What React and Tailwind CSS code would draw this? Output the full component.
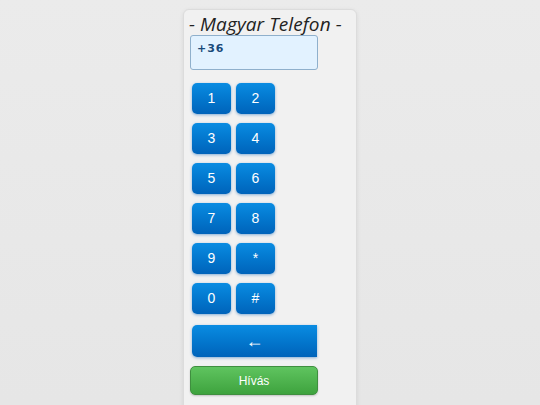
import { useState } from "react";

const keys = ["1", "2", "3", "4", "5", "6", "7", "8", "9", "*", "0", "#"];

export default function App() {
  const [number, setNumber] = useState("+36");

  const btn =
    "h-[31px] rounded-[5px] bg-gradient-to-b from-[#0a8ce2] to-[#0063ba] text-white text-[14px] shadow-[0_1px_3px_rgba(0,90,180,0.45)] flex items-center justify-center";

  return (
    <div
      className="min-h-[405px] h-[405px] overflow-hidden bg-gradient-to-b from-[#ebebeb] to-[#e6e6e6] flex justify-center"
      style={{ fontFamily: '"Liberation Sans", Arial, sans-serif' }}
    >
      <div className="mt-[9px] w-[174px] h-[420px] rounded-[6px] border border-[#dcdcdc] bg-[#f1f1f1] shadow-[0_1px_4px_rgba(0,0,0,0.08)] pl-[6px] pt-[2px]">
        <h1
          className="ml-[-1px] italic text-[19px] leading-[24px] text-[#222] tracking-[0.1px]"
          style={{ fontFamily: '"Open Sans", "DejaVu Sans", sans-serif', fontWeight: 400 }}
        >
          - Magyar Telefon -
        </h1>
        <div className="mt-[-1px] w-[128px] h-[35px] rounded-[3px] border border-[#8fb0cc] bg-[#e2f2ff] px-[6px] pt-[5px] text-[11px] font-bold tracking-[1px] text-[#1a4a7a]"
          style={{ fontFamily: '"DejaVu Sans", Verdana, sans-serif' }}
        >
          {number}
        </div>
        <div className="mt-[13px] ml-[2px] grid grid-cols-[39px_39px] gap-x-[5px] gap-y-[9px]">
          {keys.map((k) => (
            <button key={k} className={btn} onClick={() => setNumber(number + k)}>
              {k}
            </button>
          ))}
        </div>
        <button
          className="mt-[11px] ml-[2px] w-[125px] h-[32px] rounded-l-[5px] bg-gradient-to-b from-[#0a8ce2] to-[#0063ba] text-white text-[18px] shadow-[0_1px_3px_rgba(0,90,180,0.45)] flex items-center justify-center"
          onClick={() => setNumber(number.length > 3 ? number.slice(0, -1) : number)}
        >
          ←
        </button>
        <button className="mt-[9px] w-[128px] h-[29px] rounded-[5px] border border-[#3f8f3f] bg-gradient-to-b from-[#5fc45f] to-[#3ea33e] text-white text-[12px] shadow-[0_1px_2px_rgba(0,0,0,0.2)]">
          Hívás
        </button>
      </div>
    </div>
  );
}
